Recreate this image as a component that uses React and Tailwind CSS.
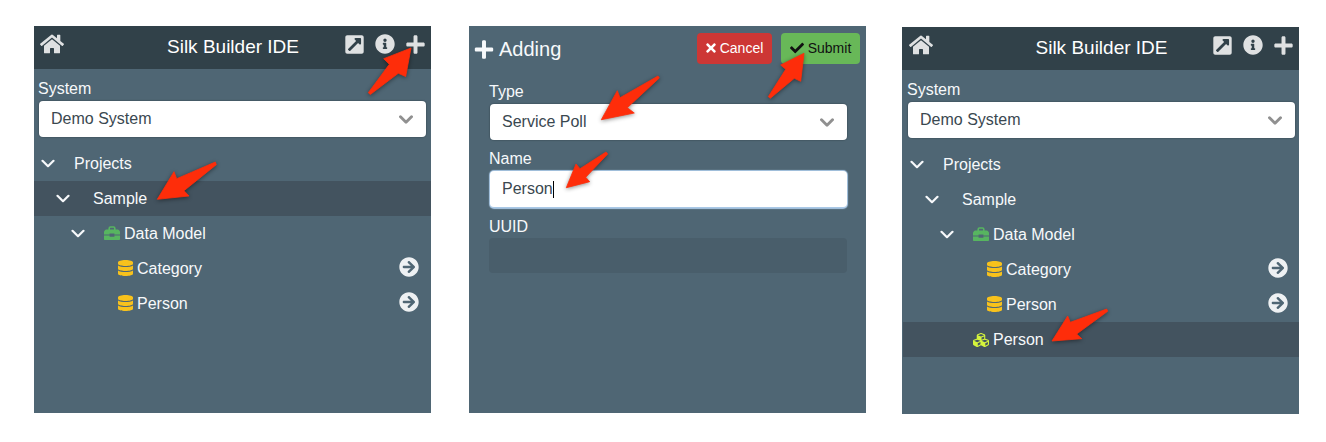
import React from "react";
import {
  FaHome,
  FaExternalLinkSquareAlt,
  FaInfoCircle,
  FaPlus,
  FaDatabase,
  FaCubes,
  FaTimes,
  FaCheck,
  FaArrowCircleRight,
} from "react-icons/fa";

function Chevron({ className, width = 2.2 }) {
  return (
    <svg viewBox="0 0 14 9" className={className} fill="none" stroke="currentColor" strokeWidth={width} strokeLinecap="round" strokeLinejoin="round">
      <path d="M1.5 1.8 7 7.2 12.5 1.8" />
    </svg>
  );
}

function Toolbox({ className }) {
  return (
    <svg viewBox="0 0 16 16" className={className} fill="currentColor">
      <path d="M5.2 5V3.2c0-.7.5-1.2 1.2-1.2h3.2c.7 0 1.2.5 1.2 1.2V5" fill="none" stroke="currentColor" strokeWidth="1.6" />
      <path d="M2.2 4.6h11.6c.5 0 .8.2 1.1.5l.7.8c.3.3.4.6.4 1v2.6h-5.6v-.9H5.6v.9H0V6.9c0-.4.1-.7.4-1l.7-.8c.3-.3.6-.5 1.1-.5z" />
      <path d="M0 10.5h5.6v1.3h4.8v-1.3H16V14c0 .6-.4 1-1 1H1c-.6 0-1-.4-1-1z" />
    </svg>
  );
}

function Select({ value }) {
  return (
    <div className="flex h-9 items-center justify-between rounded bg-white pl-3 pr-[13px] text-[#3a4850] shadow-[0_0_1px_1px_rgba(50,65,75,0.35)]">
      <span>{value}</span>
      <Chevron className="h-[9px] w-[14px] text-[#909090]" width={2.9} />
    </div>
  );
}

const indents = ["pl-[7px]", "pl-[22px]", "pl-[37px]", "pl-[84px]", "pl-[70px]"];

function Row({ level, label, icon, open, link, active }) {
  return (
    <div className={`flex h-[35px] items-center ${indents[level]} ${active ? "bg-[#43535f]" : ""}`}>
      {open && <Chevron className="h-[9px] w-[14px] shrink-0" />}
      {open && <span className={level === 1 ? "w-[23px]" : "w-[19px]"} />}
      {icon}
      <span className="flex-1">{label}</span>
      {link && <FaArrowCircleRight className="mb-[3px] size-5 text-[#eef1f3]" />}
    </div>
  );
}

const databaseIcon = <FaDatabase preserveAspectRatio="none" className="mb-px mr-1 h-4 w-[15px] text-[#f8c21c]" />;

function Explorer({ added, className }) {
  const treePadding = added ? "[&>div]:pr-[11px]" : "[&>div]:pr-3";
  return (
    <section className={`h-[387px] bg-[#4f6674] text-[#f7f9fb] ${className}`}>
      <header className="flex h-[43px] items-center bg-[#314149] pl-1.5 pr-[6px] text-[#dfe1e2]">
        <FaHome className="mb-[7px] size-6 shrink-0" />
        <h1 className="flex-1 whitespace-nowrap pl-[102px] text-center text-[19px] text-white">Silk Builder IDE</h1>
        <div className="mb-[7px] ml-[45px] flex items-center">
          <FaExternalLinkSquareAlt className="h-[21px] w-[19px]" />
          <FaInfoCircle className="ml-[11px] size-5" />
          <FaPlus className="ml-[11px] h-[21px] w-[19px]" />
        </div>
      </header>
      <div className="px-[5px] pt-2">
        <label className="-ml-px block h-6 leading-6">System</label>
        <Select value="Demo System" />
      </div>
      <div className={`pt-[9px] ${treePadding}`}>
        <Row level={0} label="Projects" open />
        <Row level={1} label="Sample" open active={!added} />
        <Row level={2} label="Data Model" open icon={<Toolbox className="mb-px mr-1 size-4 text-[#57b560]" />} />
        <Row level={3} label="Category" link icon={databaseIcon} />
        <Row level={3} label="Person" link icon={databaseIcon} />
        {added && <Row level={4} label="Person" active icon={<FaCubes className="mr-1 size-4 text-[#d5f53c]" />} />}
      </div>
    </section>
  );
}

function AddForm() {
  return (
    <section className="ml-[38px] mt-[26px] h-[387px] w-[397px] bg-[#4f6674] text-[#f7f9fb]">
      <header className="flex h-[45px] items-center pl-[5px] pr-1.5">
        <FaPlus className="mt-px h-[21px] w-[20px]" />
        <h2 className="ml-[5px] flex-1 text-xl">Adding</h2>
        <button className="flex h-[31px] w-[75px] items-center justify-center gap-1 rounded bg-[#cd3735] pb-0.5 text-sm text-white">
          <FaTimes className="h-3.5 w-2.5" />
          Cancel
        </button>
        <button className="ml-[9px] flex h-[31px] w-[79px] items-center justify-center gap-1 rounded bg-[#68b858] pb-0.5 text-sm text-[#111]">
          <FaCheck className="size-3.5" />
          Submit
        </button>
      </header>
      <div className="pl-[21px] pr-[19px] pt-2">
        <label className="-ml-px block h-[25px] leading-[25px]">Type</label>
        <Select value="Service Poll" />
        <label className="-ml-px mt-1.5 block h-[25px] leading-[25px]">Name</label>
        <div className="flex h-[37px] items-center rounded border-b border-[#a9c8e6] bg-white pl-3 text-[#3a4850] shadow-[0_0_1px_1px_#a9c8e6]">
          Person
          <span className="h-[17px] w-px bg-black" />
        </div>
        <label className="-ml-px mt-1.5 block h-6 leading-[26px]">UUID</label>
        <div className="-ml-px h-[35px] rounded bg-[#495e6b]" />
      </div>
    </section>
  );
}

const arrows = [
  "411,48 383.7,58.7 389.3,64.3 368.3,92.7 370.3,94.5 398.3,73.3 405.7,76.5",
  "157.3,199.3 174,171.7 176.7,178.7 215.3,162 216.3,164.7 184,190.7 189,196",
  "601.3,119.7 617.3,90.7 620,97.7 658,76 659.3,78 627.3,107.7 634.3,113",
  "566.3,187.7 576,164 580,168.7 606,152 607.7,154 585.7,177.3 589.7,181.7",
  "804,53.3 780.7,65 785.7,69.3 768.3,96.7 770.3,98.3 794.3,78.3 800.7,81.3",
  "1052,341 1067.7,316 1070.3,322.3 1106.7,309 1107.7,311.3 1076.7,334 1081.7,338.7",
];

export default function App() {
  return (
    <main className="relative flex h-[442px] w-[1326px] items-start overflow-hidden bg-white font-['Liberation_Sans',sans-serif] text-base">
      <Explorer className="ml-[34px] mt-[26px] w-[397px]" />
      <AddForm />
      <Explorer added className="ml-9 mt-[27px] w-[397px] border-l border-[#4f6674] [&>header]:-ml-px [&>header]:pl-[7px] [&>div:nth-child(2)]:pr-1" />
      <svg viewBox="0 0 1326 442" className="pointer-events-none absolute inset-0 h-[442px] w-[1326px] drop-shadow-[0_1px_2px_rgba(0,0,0,0.45)]">
        {arrows.map((points) => (
          <polygon key={points} points={points} fill="#fe2d0a" stroke="#fe2d0a" strokeWidth="0.8" strokeLinejoin="round" />
        ))}
      </svg>
    </main>
  );
}
